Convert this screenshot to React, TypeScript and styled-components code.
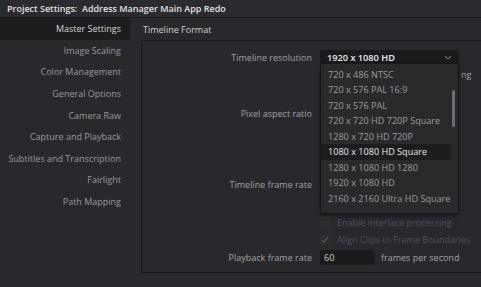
import styled, { createGlobalStyle } from "styled-components";

const Global = createGlobalStyle`
  html, body {
    margin: 0;
    padding: 0;
    background: #28282d;
    font-family: "Open Sans", "Noto Sans", sans-serif;
    overflow: hidden;
  }
`;

const Window = styled.div`
  width: 481px;
  height: 287px;
  display: flex;
  flex-direction: column;
  background: #28282d;
`;

const TitleBar = styled.div`
  height: 17px;
  display: flex;
  align-items: center;
  padding-left: 7px;
  background: #2b2b2f;
  border-bottom: 1px solid #1a1a1c;
  color: #e0e0e0;
  font-size: 9px;
  font-weight: 600;
  white-space: pre;
`;

const Body = styled.div`
  flex: 1;
  display: flex;
`;

const Sidebar = styled.div`
  width: 130px;
  display: flex;
  flex-direction: column;
`;

const NavItem = styled.div<{ $active?: boolean }>`
  height: 21.6px;
  display: flex;
  align-items: center;
  justify-content: flex-end;
  padding-right: 9px;
  font-size: 9px;
  color: ${(p) => (p.$active ? "#d4d4d4" : "#9a9a9c")};
  background: ${(p) => (p.$active ? "#1d1d1f" : "transparent")};
  white-space: nowrap;
`;

const Main = styled.div`
  flex: 1;
  display: flex;
  flex-direction: column;
`;

const SectionHead = styled.div`
  height: 22px;
  display: flex;
  align-items: center;
  padding-left: 13px;
  color: #d0d0d0;
  font-size: 9px;
`;

const Panel = styled.div`
  margin-left: 11px;
  height: 233px;
  border-top: 1px solid #18181a;
  border-left: 1px solid #161618;
  border-bottom: 1px solid #161618;
  display: flex;
  flex-direction: column;
  padding-top: 8px;
  box-sizing: border-box;
`;

const Row = styled.div<{ $h: number; $top?: number; $raised?: boolean }>`
  height: ${(p) => p.$h}px;
  margin-top: ${(p) => p.$top ?? 0}px;
  display: grid;
  grid-template-columns: 170px 1fr;
  column-gap: 8px;
  align-items: center;
  position: relative;
  z-index: ${(p) => (p.$raised ? 5 : "auto")};
`;

const Label = styled.div`
  text-align: right;
  font-size: 9px;
  color: #a2a2a4;
  white-space: nowrap;
`;

const Controls = styled.div`
  display: flex;
  align-items: center;
  gap: 6px;
  position: relative;
`;

const Select = styled.div`
  width: 139px;
  height: 15px;
  box-sizing: border-box;
  background: #1b1b1d;
  border-radius: 2px;
  display: flex;
  align-items: center;
  justify-content: space-between;
  padding: 0 7px;
  color: #ececec;
  font-size: 9.2px;
  font-weight: 600;
`;

const Menu = styled.div`
  position: absolute;
  left: 0;
  top: 14px;
  width: 139px;
  height: 150px;
  box-sizing: border-box;
  padding-top: 3px;
  background: #2a2a2d;
  border: 1px solid #151517;
  border-top: none;
  border-radius: 0 0 2px 2px;
  overflow: hidden;
  z-index: 10;
  box-shadow: 0 2px 4px rgba(0, 0, 0, 0.35);
`;

const MenuItem = styled.div<{ $active?: boolean }>`
  height: 15.5px;
  width: 130px;
  display: flex;
  align-items: center;
  padding-left: 7px;
  box-sizing: border-box;
  font-size: 9.1px;
  color: ${(p) => (p.$active ? "#e8e8e8" : "#9c9c9e")};
  background: ${(p) => (p.$active ? "#1d1d1f" : "transparent")};
  white-space: nowrap;
`;

const Scroll = styled.div`
  position: absolute;
  right: 3px;
  top: 26px;
  width: 3px;
  height: 37px;
  border-radius: 2px;
  background: #6a6f77;
`;

const Check = styled.div`
  width: 10px;
  height: 10px;
  box-sizing: border-box;
  border: 1px solid #333336;
  border-radius: 1px;
  background: #2c2c30;
  display: flex;
  align-items: center;
  justify-content: center;
`;

const Muted = styled.span`
  font-size: 9px;
  color: #525257;
  white-space: nowrap;
  margin-left: 1px;
`;

const Plain = styled.span<{ $offset?: number }>`
  font-size: 9px;
  color: #a2a2a4;
  white-space: nowrap;
  margin-left: ${(p) => p.$offset ?? 0}px;
`;

const Input = styled.div`
  width: 55px;
  height: 15px;
  box-sizing: border-box;
  background: #1b1b1d;
  border-radius: 2px;
  padding-left: 4px;
  display: flex;
  align-items: center;
  font-size: 9px;
  color: #cfcfcf;
`;

const navItems = [
  "Master Settings",
  "Image Scaling",
  "Color Management",
  "General Options",
  "Camera Raw",
  "Capture and Playback",
  "Subtitles and Transcription",
  "Fairlight",
  "Path Mapping",
];

const resolutions = [
  "720 x 486 NTSC",
  "720 x 576 PAL 16:9",
  "720 x 576 PAL",
  "720 x 720 HD 720P Square",
  "1280 x 720 HD 720P",
  "1080 x 1080 HD Square",
  "1280 x 1080 HD 1280",
  "1920 x 1080 HD",
  "2160 x 2160 Ultra HD Square",
];

const Chevron = () => (
  <svg width="8" height="5" viewBox="0 0 8 5" fill="none">
    <path d="M1 1l3 3 3-3" stroke="#8c8c90" strokeWidth="1" />
  </svg>
);

const Tick = () => (
  <svg width="8" height="8" viewBox="0 0 8 8" fill="none">
    <path d="M1.2 4.2l1.8 1.9L6.8 1.5" stroke="#5a5a60" strokeWidth="1.1" />
  </svg>
);

export default function App() {
  return (
    <Window>
      <Global />
      <TitleBar>{"Project Settings:  Address Manager Main App Redo"}</TitleBar>
      <Body>
        <Sidebar>
          {navItems.map((n, i) => (
            <NavItem key={n} $active={i === 0}>
              {n}
            </NavItem>
          ))}
        </Sidebar>
        <Main>
          <SectionHead>Timeline Format</SectionHead>
          <Panel>
            <Row $h={16} $raised>
              <Label>Timeline resolution</Label>
              <Controls>
                <Select>
                  1920 x 1080 HD
                  <Chevron />
                </Select>
                <Menu>
                  {resolutions.map((r) => (
                    <MenuItem key={r} $active={r === "1080 x 1080 HD Square"}>
                      {r}
                    </MenuItem>
                  ))}
                  <Scroll />
                </Menu>
              </Controls>
            </Row>
            <Row $h={18}>
              <span />
              <Controls>
                <Plain $offset={141}>ng</Plain>
              </Controls>
            </Row>
            <Row $h={20} $top={20}>
              <Label>Pixel aspect ratio</Label>
              <Controls />
            </Row>
            <Row $h={20} $top={51}>
              <Label>Timeline frame rate</Label>
              <Controls />
            </Row>
            <Row $h={16} $top={20}>
              <span />
              <Controls>
                <Check />
                <Muted>Enable interlace processing</Muted>
              </Controls>
            </Row>
            <Row $h={17} $top={1}>
              <span />
              <Controls>
                <Check>
                  <Tick />
                </Check>
                <Muted>Align Clips to Frame Boundaries</Muted>
              </Controls>
            </Row>
            <Row $h={17} $top={1}>
              <Label>Playback frame rate</Label>
              <Controls>
                <Input>60</Input>
                <Plain>frames per second</Plain>
              </Controls>
            </Row>
          </Panel>
        </Main>
      </Body>
    </Window>
  );
}
